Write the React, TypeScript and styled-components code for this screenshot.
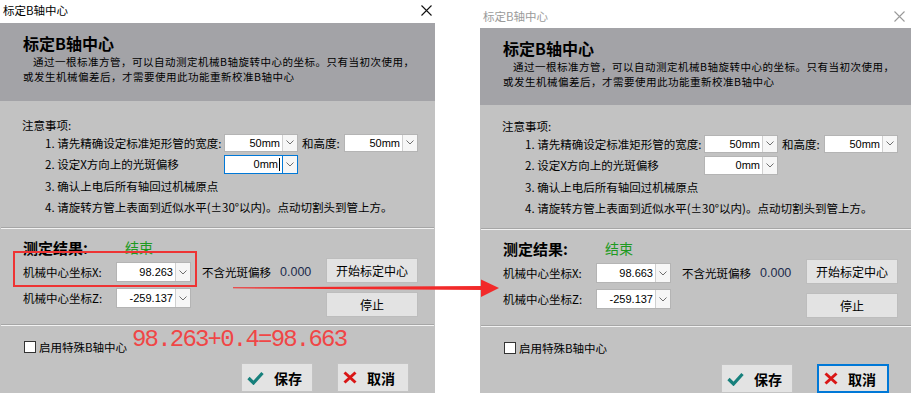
import React from "react";
import styled, { createGlobalStyle } from "styled-components";

const GlobalStyle = createGlobalStyle`
  html, body {
    margin: 0;
    padding: 0;
    background: #ffffff;
    overflow: hidden;
  }
  body {
    font-family: "Noto Sans CJK SC", "Noto Sans", sans-serif;
    color: #000;
  }
`;

const Page = styled.div`
  position: relative;
  display: flex;
  align-items: flex-start;
  gap: 45px;
  width: 911px;
  height: 393px;
  overflow: hidden;
`;

const Dialog = styled.div`
  flex: none;
  width: 435px;
  height: 393px;
  display: flex;
  flex-direction: column;
  background: #c2c2c2;
`;

const TitleBar = styled.div<{ $inactive?: boolean }>`
  box-sizing: border-box;
  height: ${(p) => (p.$inactive ? 28 : 23)}px;
  padding: ${(p) => (p.$inactive ? "4px 10px 0 3px" : "0 3px 3px 3px")};
  background: #ffffff;
  display: flex;
  align-items: center;
  justify-content: space-between;
  font-size: 11.5px;
  color: ${(p) => (p.$inactive ? "#9a9a9a" : "#000000")};
`;

const Header = styled.div<{ $h: number }>`
  box-sizing: border-box;
  height: ${(p) => p.$h}px;
  padding: 9px 10px 0 23px;
  background: #a3a3a7;
`;

const HeaderTitle = styled.div`
  font-size: 16px;
  font-weight: 700;
  line-height: 22px;
`;

const HeaderText = styled.p`
  margin: 0;
  font-size: 10.5px;
  line-height: 15.3px;
  letter-spacing: 0.5px;
  text-indent: 10px;
  white-space: nowrap;
`;

const Notes = styled.div<{ $top: number }>`
  padding: ${(p) => p.$top}px 0 9px 22px;
  font-size: 11.5px;
`;

const NotesTitle = styled.div`
  line-height: 14px;
`;

const NoteGrid = styled.div`
  display: grid;
  grid-template-columns: 179px 74px 46px 74px;
  grid-auto-rows: 21.5px;
  align-items: center;
  padding-left: 23px;
`;

const NoteLabel = styled.span<{ $span?: boolean }>`
  white-space: nowrap;
  grid-column: ${(p) => (p.$span ? "1 / -1" : "auto")};
`;

const SideLabel = styled.span`
  padding-left: 4px;
`;

const Combo = styled.div<{ $w: number; $h: number; $focused?: boolean }>`
  box-sizing: border-box;
  width: ${(p) => p.$w}px;
  height: ${(p) => p.$h}px;
  display: flex;
  background: #ffffff;
  border: 1px solid ${(p) => (p.$focused ? "#0078d7" : "#b4b4b4")};
  font-family: "Liberation Sans", sans-serif;
  font-size: 11px;
`;

const ComboValue = styled.div`
  flex: 1;
  display: flex;
  align-items: center;
  justify-content: flex-end;
  padding-right: 2px;
`;

const Caret = styled.span`
  width: 1px;
  height: 13px;
  margin-left: 1px;
  background: #000;
`;

const ComboDrop = styled.div<{ $focused?: boolean }>`
  width: 14px;
  display: flex;
  align-items: center;
  justify-content: center;
  border-left: 1px solid ${(p) => (p.$focused ? "#0078d7" : "#d0d0d0")};
  background: #f6f6f6;
`;

const Divider = styled.div`
  height: 0;
  margin: 0 1px;
  border-top: 1px solid #a6a6a6;
  border-bottom: 1px solid #f2f2f2;
`;

const Result = styled.div`
  padding: 8px 17px 7px 23px;
`;

const ResultHead = styled.div`
  display: flex;
  align-items: center;
  height: 20px;
`;

const ResultTitle = styled.span`
  width: 102px;
  font-size: 15px;
  font-weight: 700;
`;

const Status = styled.span`
  font-size: 14px;
  color: #1e9a22;
`;

const ResultBody = styled.div`
  display: flex;
  justify-content: space-between;
  margin-top: 1px;
`;

const Coords = styled.div`
  display: flex;
  flex-direction: column;
  gap: 6px;
  margin-top: 4px;
`;

const CoordRow = styled.div`
  display: flex;
  align-items: center;
  height: 20px;
  font-size: 11.5px;
`;

const CoordLabel = styled.span`
  width: 93px;
`;

const OffsetText = styled.span`
  margin-left: 11px;
`;

const OffsetValue = styled.span`
  margin-left: 9px;
  font-family: "Liberation Sans", sans-serif;
  font-size: 12.5px;
  color: #1c2b4c;
`;

const Actions = styled.div`
  display: flex;
  flex-direction: column;
  gap: 9px;
`;

const PushButton = styled.button`
  width: 92px;
  height: 25px;
  padding: 0;
  border: 1px solid #bdbdbd;
  background: #e3e3e3;
  font-family: "Noto Sans CJK SC", sans-serif;
  font-size: 12px;
  color: #000;
`;

const Footer = styled.div`
  padding: 14px 26px 0 24px;
  display: flex;
  flex-direction: column;
`;

const CheckRow = styled.label`
  display: flex;
  align-items: center;
  gap: 3px;
  height: 14px;
  font-size: 11.5px;
`;

const CheckBox = styled.span`
  box-sizing: border-box;
  width: 12px;
  height: 12px;
  border: 1px solid #333333;
  background: #ffffff;
`;

const FooterButtons = styled.div`
  display: flex;
  justify-content: flex-end;
  gap: 24px;
  margin-top: 9px;
`;

const DialogButton = styled.button<{ $focused?: boolean }>`
  box-sizing: border-box;
  width: 72px;
  height: 29px;
  display: flex;
  align-items: center;
  gap: 10px;
  padding: 0 0 0 5px;
  border: ${(p) => (p.$focused ? "2px solid #0078d7" : "1px solid #c4c4c4")};
  background: #e3e3e3;
  font-family: "Noto Sans CJK SC", sans-serif;
  font-size: 14px;
  font-weight: 700;
  color: #000;
`;

const RedBox = styled.div`
  position: absolute;
  left: 13px;
  top: 251px;
  width: 184px;
  height: 36px;
  box-sizing: border-box;
  border: 2px solid #ee3434;
`;

const ArrowSvg = styled.svg`
  position: absolute;
  left: 230px;
  top: 276px;
`;

const Formula = styled.div`
  position: absolute;
  left: 132px;
  top: 328px;
  font-family: "Liberation Mono", monospace;
  font-size: 24px;
  line-height: 24px;
  letter-spacing: -1.8px;
  color: #f04646;
`;

const Chevron = () => (
  <svg width="8" height="5" viewBox="0 0 8 5">
    <polyline points="0.5,0.5 4,4 7.5,0.5" fill="none" stroke="#6e6e6e" strokeWidth="1" />
  </svg>
);

const CloseIcon = ({ color }: { color: string }) => (
  <svg width="11" height="11" viewBox="0 0 11 11">
    <path d="M0.5 0.5 L10.5 10.5 M10.5 0.5 L0.5 10.5" stroke={color} strokeWidth="1.1" />
  </svg>
);

const CheckIcon = () => (
  <svg width="17" height="14" viewBox="0 0 17 14">
    <path d="M1.5 7 L6.5 12 L15.5 2" fill="none" stroke="#17807c" strokeWidth="3.2" />
  </svg>
);

const CrossIcon = () => (
  <svg width="14" height="13" viewBox="0 0 14 13">
    <path d="M1.5 1.5 L12.5 11.5 M12.5 1.5 L1.5 11.5" stroke="#d91616" strokeWidth="3" />
  </svg>
);

interface ComboBoxProps {
  value: string;
  w: number;
  h: number;
  focused?: boolean;
}

const ComboBox: React.FC<ComboBoxProps> = ({ value, w, h, focused }) => (
  <Combo $w={w} $h={h} $focused={focused}>
    <ComboValue>
      {value}
      {focused && <Caret />}
    </ComboValue>
    <ComboDrop $focused={focused}>
      <Chevron />
    </ComboDrop>
  </Combo>
);

interface CalibrationProps {
  x: string;
  inactive?: boolean;
}

const CalibrationDialog: React.FC<CalibrationProps> = ({ x, inactive }) => (
  <Dialog>
    <TitleBar $inactive={inactive}>
      <span>标定B轴中心</span>
      <CloseIcon color={inactive ? "#9a9a9a" : "#111"} />
    </TitleBar>
    <Header $h={inactive ? 77 : 78}>
      <HeaderTitle>标定B轴中心</HeaderTitle>
      <HeaderText>
        通过一根标准方管，可以自动测定机械B轴旋转中心的坐标。只有当初次使用，
        <br />
        或发生机械偏差后，才需要使用此功能重新校准B轴中心
      </HeaderText>
    </Header>
    <Notes $top={inactive ? 14 : 17}>
      <NotesTitle>注意事项:</NotesTitle>
      <NoteGrid>
        <NoteLabel>1. 请先精确设定标准矩形管的宽度:</NoteLabel>
        <ComboBox value="50mm" w={74} h={18} />
        <SideLabel>和高度:</SideLabel>
        <ComboBox value="50mm" w={74} h={18} />
        <NoteLabel>2. 设定X方向上的光斑偏移</NoteLabel>
        <ComboBox value="0mm" w={74} h={19} focused={!inactive} />
        <span />
        <span />
        <NoteLabel $span>3. 确认上电后所有轴回过机械原点</NoteLabel>
        <NoteLabel $span>4. 请旋转方管上表面到近似水平(±30°以内)。点动切割头到管上方。</NoteLabel>
      </NoteGrid>
    </Notes>
    <Divider />
    <Result>
      <ResultHead>
        <ResultTitle>测定结果:</ResultTitle>
        <Status>结束</Status>
      </ResultHead>
      <ResultBody>
        <Coords>
          <CoordRow>
            <CoordLabel>机械中心坐标X:</CoordLabel>
            <ComboBox value={x} w={75} h={20} />
            <OffsetText>不含光斑偏移</OffsetText>
            <OffsetValue>0.000</OffsetValue>
          </CoordRow>
          <CoordRow>
            <CoordLabel>机械中心坐标Z:</CoordLabel>
            <ComboBox value="-259.137" w={75} h={20} />
          </CoordRow>
        </Coords>
        <Actions>
          <PushButton type="button">开始标定中心</PushButton>
          <PushButton type="button">停止</PushButton>
        </Actions>
      </ResultBody>
    </Result>
    <Divider />
    <Footer>
      <CheckRow>
        <CheckBox />
        启用特殊B轴中心
      </CheckRow>
      <FooterButtons>
        <DialogButton type="button">
          <CheckIcon />
          保存
        </DialogButton>
        <DialogButton type="button" $focused={inactive}>
          <CrossIcon />
          取消
        </DialogButton>
      </FooterButtons>
    </Footer>
  </Dialog>
);

export default function App() {
  return (
    <>
      <GlobalStyle />
      <Page>
        <CalibrationDialog x="98.263" />
        <CalibrationDialog x="98.663" inactive />

        {/* annotations drawn over the screenshot */}
        <RedBox />
        <Formula>98.263+0.4=98.663</Formula>
        <ArrowSvg width="272" height="24" viewBox="0 0 272 24">
          <polygon points="3,11.3 3,12.3 253,14 253,10" fill="#f22a2a" />
          <polygon points="251,3.5 269,12 251,21" fill="#f22a2a" />
        </ArrowSvg>
      </Page>
    </>
  );
}
